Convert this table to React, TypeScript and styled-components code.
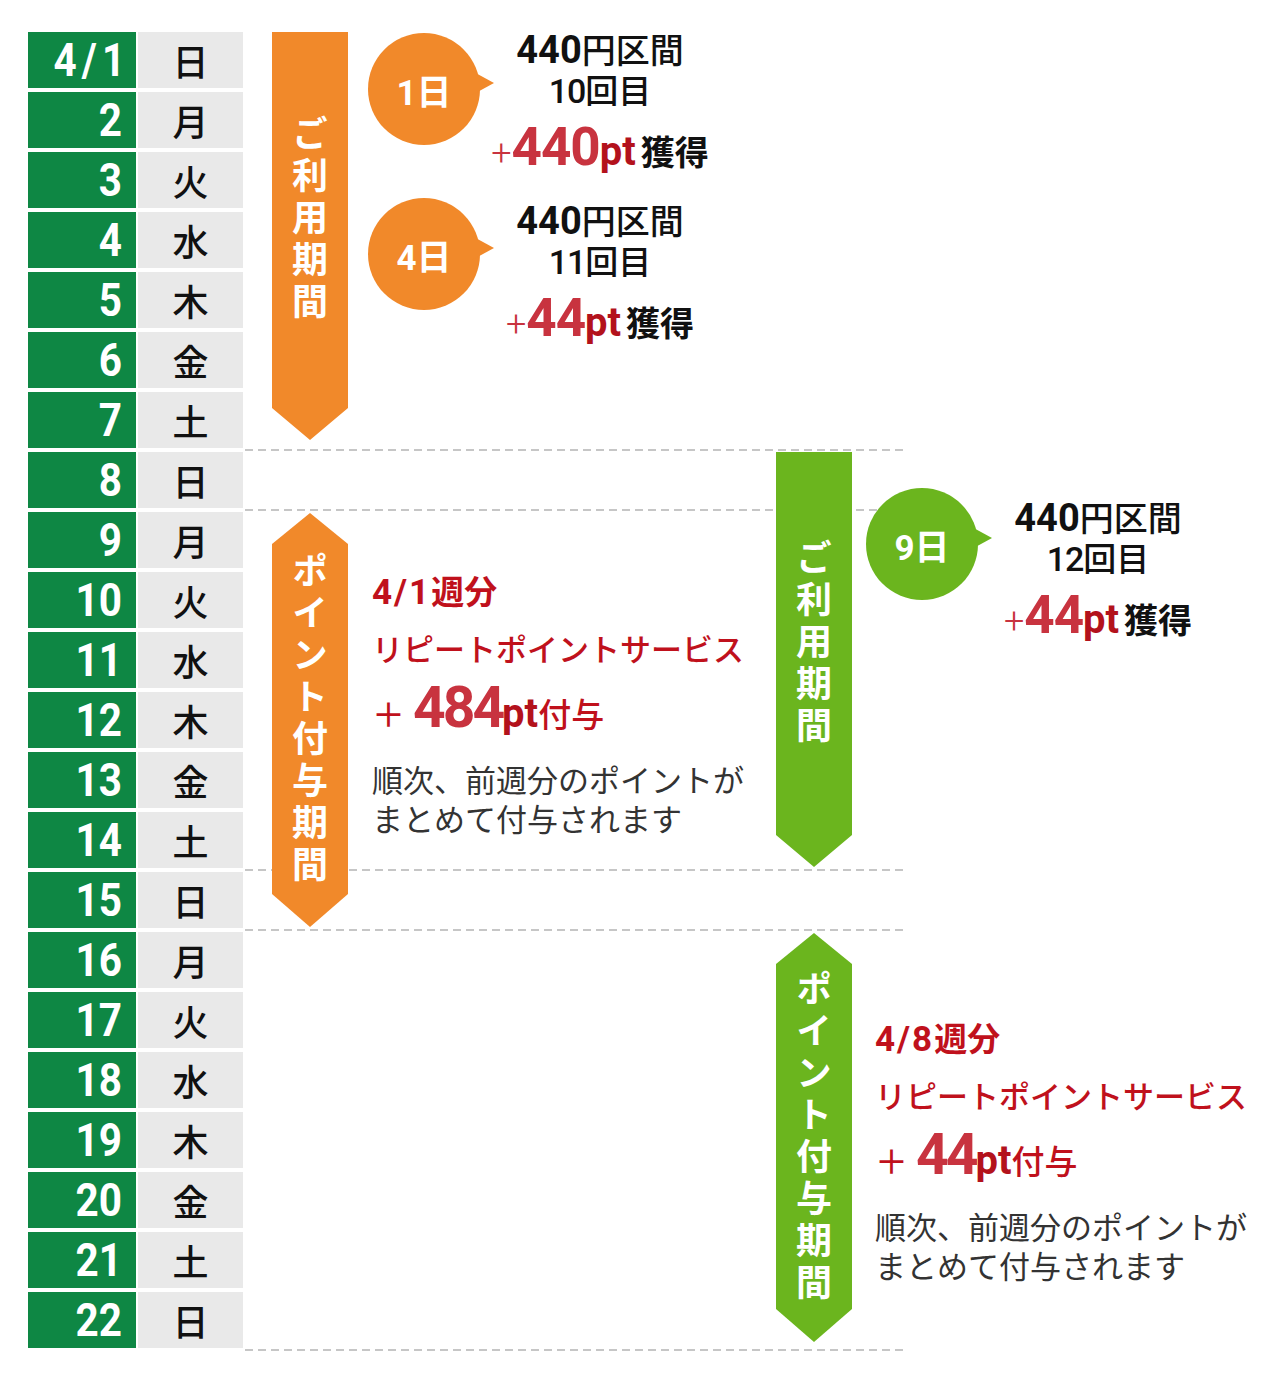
import React from 'react';
import styled, { createGlobalStyle } from 'styled-components';

const colors = {
  table: '#0e8744',
  cell: '#e9e9e9',
  orange: '#f1892a',
  lime: '#6bb51e',
  red: '#c8333f',
  darkRed: '#b3121c',
  text: '#c0111c',
  ink: '#111111',
  note: '#333333',
  dash: '#c6c6c6',
};

const cjk = `"Noto Sans CJK JP", "Noto Sans", sans-serif`;
const latin = `Roboto, "Noto Sans CJK JP", sans-serif`;

const GlobalStyle = createGlobalStyle`
  html, body {
    margin: 0;
    padding: 0;
    background: #ffffff;
  }
  body {
    font-family: ${cjk};
  }
`;

const Board = styled.div`
  display: grid;
  grid-template-columns: 215px 29px 76px 428px 76px 1fr;
  grid-template-rows: repeat(22, 60px);
  width: 1280px;
  height: 1380px;
  box-sizing: border-box;
  padding: 32px 0 0 28px;
`;

/* ---- calendar column ---- */

const DayRow = styled.div<{ $row: number }>`
  grid-column: 1;
  grid-row: ${({ $row }) => $row};
  align-self: start;
  display: flex;
  gap: 2px;
  height: 56px;
`;

const NumCell = styled.div<{ $spaced?: boolean }>`
  width: 108px;
  box-sizing: border-box;
  padding-right: ${({ $spaced }) => ($spaced ? 12 : 14)}px;
  background: ${colors.table};
  color: #ffffff;
  font-family: ${latin};
  font-weight: 700;
  font-size: 47px;
  line-height: 56px;
  text-align: right;
  overflow: hidden;
`;

// the printed calendar uses a condensed face; squeeze Roboto towards it
const NumText = styled.span<{ $spaced?: boolean }>`
  display: inline-block;
  transform: scaleX(0.86);
  transform-origin: right center;
  letter-spacing: ${({ $spaced }) => ($spaced ? 6 : 0)}px;
  margin-right: ${({ $spaced }) => ($spaced ? -6 : 0)}px;
`;

const NameCell = styled.div`
  width: 105px;
  background: ${colors.cell};
  color: ${colors.ink};
  font-family: ${cjk};
  font-weight: 500;
  font-size: 36px;
  line-height: 56px;
  text-align: center;
`;

const DashLine = styled.div<{ $row: number }>`
  grid-column: 2 / -1;
  grid-row: ${({ $row }) => $row};
  align-self: end;
  justify-self: start;
  width: 663px;
  height: 2px;
  margin: 0 0 1px 2px;
  background: repeating-linear-gradient(
    90deg,
    ${colors.dash} 0 8px,
    transparent 8px 13px
  );
`;

/* ---- period banners ---- */

type Shape = 'arrow' | 'hex';

const shapes: Record<Shape, string> = {
  arrow:
    'polygon(0 0, 100% 0, 100% calc(100% - 32px), 50% 100%, 0 calc(100% - 32px))',
  hex: 'polygon(50% 0, 100% 31px, 100% calc(100% - 33px), 50% 100%, 0 calc(100% - 33px), 0 31px)',
};

const Banner = styled.div<{
  $color: string;
  $shape: Shape;
  $col: number;
  $rows: string;
  $height: number;
  $top?: number;
}>`
  grid-column: ${({ $col }) => $col};
  grid-row: ${({ $rows }) => $rows};
  align-self: start;
  margin-top: ${({ $top }) => $top ?? 0}px;
  height: ${({ $height }) => $height}px;
  box-sizing: border-box;
  padding-bottom: ${({ $shape }) => ($shape === 'arrow' ? 32 : 0)}px;
  background: ${({ $color }) => $color};
  clip-path: ${({ $shape }) => shapes[$shape]};
  display: flex;
  align-items: center;
  justify-content: center;
`;

const BannerLabel = styled.span`
  writing-mode: vertical-rl;
  text-orientation: upright;
  color: #ffffff;
  font-family: ${cjk};
  font-weight: 700;
  font-size: 36px;
  line-height: 1;
  letter-spacing: 6px;
`;

/* ---- usage bubbles ---- */

const UsageStack = styled.div<{ $col: number; $rows: string; $top: number; $left: number }>`
  grid-column: ${({ $col }) => $col};
  grid-row: ${({ $rows }) => $rows};
  display: flex;
  flex-direction: column;
  gap: 15px;
  padding: ${({ $top }) => $top}px 0 0 ${({ $left }) => $left}px;
`;

const UsageItem = styled.div`
  display: flex;
  align-items: flex-start;
`;

const Bubble = styled.div<{ $color: string; $top: number }>`
  position: relative;
  flex: none;
  width: 112px;
  height: 112px;
  margin-top: ${({ $top }) => $top}px;
  border-radius: 50%;
  background: ${({ $color }) => $color};
  display: flex;
  align-items: center;
  justify-content: center;
  color: #ffffff;
  font-family: ${latin};
  font-weight: 700;
  font-size: 35px;

  &::after {
    content: '';
    position: absolute;
    left: 104px;
    top: 38px;
    border-left: 22px solid ${({ $color }) => $color};
    border-top: 12px solid transparent;
    border-bottom: 12px solid transparent;
  }
`;

const TextCol = styled.div<{ $shift: number }>`
  width: 240px;
  margin-top: ${({ $shift }) => $shift}px;
  display: flex;
  flex-direction: column;
  text-align: center;
  white-space: nowrap;
  color: ${colors.ink};
  font-family: ${cjk};
`;

const RouteLine = styled.div`
  height: 36px;
  line-height: 36px;
  font-size: 34px;
  font-weight: 500;
`;

const CountLine = styled.div`
  height: 44px;
  line-height: 44px;
  font-size: 33px;
  font-weight: 500;
`;

const EarnLine = styled.div`
  height: 72px;
  line-height: 72px;
  font-size: 34px;
  font-weight: 700;
`;

const Num = styled.span<{ $size: number; $weight?: number; $color?: string; $tight?: number }>`
  font-family: ${latin};
  font-size: ${({ $size }) => $size}px;
  font-weight: ${({ $weight }) => $weight ?? 700};
  color: ${({ $color }) => $color ?? 'inherit'};
  letter-spacing: ${({ $tight }) => $tight ?? 0}px;
`;

const Gap = styled.span<{ $w: number }>`
  display: inline-block;
  width: ${({ $w }) => $w}px;
`;

/* ---- point grant notes ---- */

const GrantBlock = styled.div<{ $col: number; $rows: string; $top: number; $left: number }>`
  grid-column: ${({ $col }) => $col};
  grid-row: ${({ $rows }) => $rows};
  display: flex;
  flex-direction: column;
  padding: ${({ $top }) => $top}px 0 0 ${({ $left }) => $left}px;
  color: ${colors.text};
  font-family: ${cjk};
  white-space: nowrap;
`;

const WeekLine = styled.div`
  height: 50px;
  line-height: 50px;
  font-size: 33px;
  font-weight: 700;
`;

const ServiceLine = styled.div`
  height: 66px;
  line-height: 66px;
  font-size: 31px;
  font-weight: 500;
`;

const AmountLine = styled.div`
  height: 54px;
  line-height: 54px;
  font-size: 33px;
  font-weight: 500;
`;

const NoteLine = styled.div<{ $first?: boolean }>`
  margin-top: ${({ $first }) => ($first ? 24 : 0)}px;
  line-height: 39px;
  font-size: 31px;
  font-weight: 400;
  color: ${colors.note};
`;

const weekdays = ['日', '月', '火', '水', '木', '金', '土'];
const days = Array.from({ length: 22 }, (_, i) => ({
  label: i === 0 ? '4/1' : String(i + 1),
  name: weekdays[i % 7],
}));

const dashRows = [7, 8, 14, 15, 22];

interface UsageProps {
  color: string;
  day: string;
  count: string;
  points: string;
  bubbleTop: number;
  shift: number;
}

const Usage: React.FC<UsageProps> = ({ color, day, count, points, bubbleTop, shift }) => (
  <UsageItem>
    <Bubble $color={color} $top={bubbleTop}>
      {day}日
    </Bubble>
    <TextCol $shift={shift}>
      <RouteLine>
        <Num $size={38}>440</Num>円区間
      </RouteLine>
      <CountLine>
        <Num $size={34} $weight={500} $tight={-1}>
          {count}
        </Num>
        回目
      </CountLine>
      <EarnLine>
        <Num $size={36} $weight={300} $color={colors.red}>
          +
        </Num>
        <Num $size={53} $color={colors.red} $tight={-1}>
          {points}
        </Num>
        <Num $size={40} $color={colors.darkRed}>
          pt
        </Num>
        <Gap $w={5} />
        獲得
      </EarnLine>
    </TextCol>
  </UsageItem>
);

interface GrantProps {
  col: number;
  rows: string;
  top: number;
  left: number;
  week: string;
  points: string;
}

const Grant: React.FC<GrantProps> = ({ col, rows, top, left, week, points }) => (
  <GrantBlock $col={col} $rows={rows} $top={top} $left={left}>
    <WeekLine>
      <Num $size={35} $tight={2}>
        {week}
      </Num>
      週分
    </WeekLine>
    <ServiceLine>リピートポイントサービス</ServiceLine>
    <AmountLine>
      ＋<Gap $w={8} />
      <Num $size={57} $color={colors.red} $tight={-3}>
        {points}
      </Num>
      <Num $size={40} $color={colors.darkRed}>
        pt
      </Num>
      付与
    </AmountLine>
    <NoteLine $first>順次、前週分のポイントが</NoteLine>
    <NoteLine>まとめて付与されます</NoteLine>
  </GrantBlock>
);

const App: React.FC = () => (
  <>
    <GlobalStyle />
    <Board>
      {days.map((d, i) => (
        <DayRow key={d.label} $row={i + 1}>
          <NumCell $spaced={i === 0}>
            <NumText $spaced={i === 0}>{d.label}</NumText>
          </NumCell>
          <NameCell>{d.name}</NameCell>
        </DayRow>
      ))}

      {dashRows.map((r) => (
        <DashLine key={r} $row={r} />
      ))}

      <Banner $color={colors.orange} $shape="arrow" $col={3} $rows="1 / 8" $height={408}>
        <BannerLabel>ご利用期間</BannerLabel>
      </Banner>
      <Banner $color={colors.orange} $shape="hex" $col={3} $rows="9 / 16" $height={414} $top={1}>
        <BannerLabel>ポイント付与期間</BannerLabel>
      </Banner>
      <Banner $color={colors.lime} $shape="arrow" $col={5} $rows="8 / 15" $height={415}>
        <BannerLabel>ご利用期間</BannerLabel>
      </Banner>
      <Banner $color={colors.lime} $shape="hex" $col={5} $rows="16 / 23" $height={409} $top={1}>
        <BannerLabel>ポイント付与期間</BannerLabel>
      </Banner>

      <UsageStack $col={4} $rows="1 / 8" $top={0} $left={20}>
        <Usage color={colors.orange} day="1" count="10" points="440" bubbleTop={1} shift={-1} />
        <Usage color={colors.orange} day="4" count="11" points="44" bubbleTop={0} shift={4} />
      </UsageStack>
      <UsageStack $col={6} $rows="8 / 15" $top={36} $left={14}>
        <Usage color={colors.lime} day="9" count="12" points="44" bubbleTop={0} shift={11} />
      </UsageStack>

      <Grant col={4} rows="9 / 16" top={53} left={24} week="4/1" points="484" />
      <Grant col={6} rows="16 / 23" top={80} left={23} week="4/8" points="44" />
    </Board>
  </>
);

export default App;
